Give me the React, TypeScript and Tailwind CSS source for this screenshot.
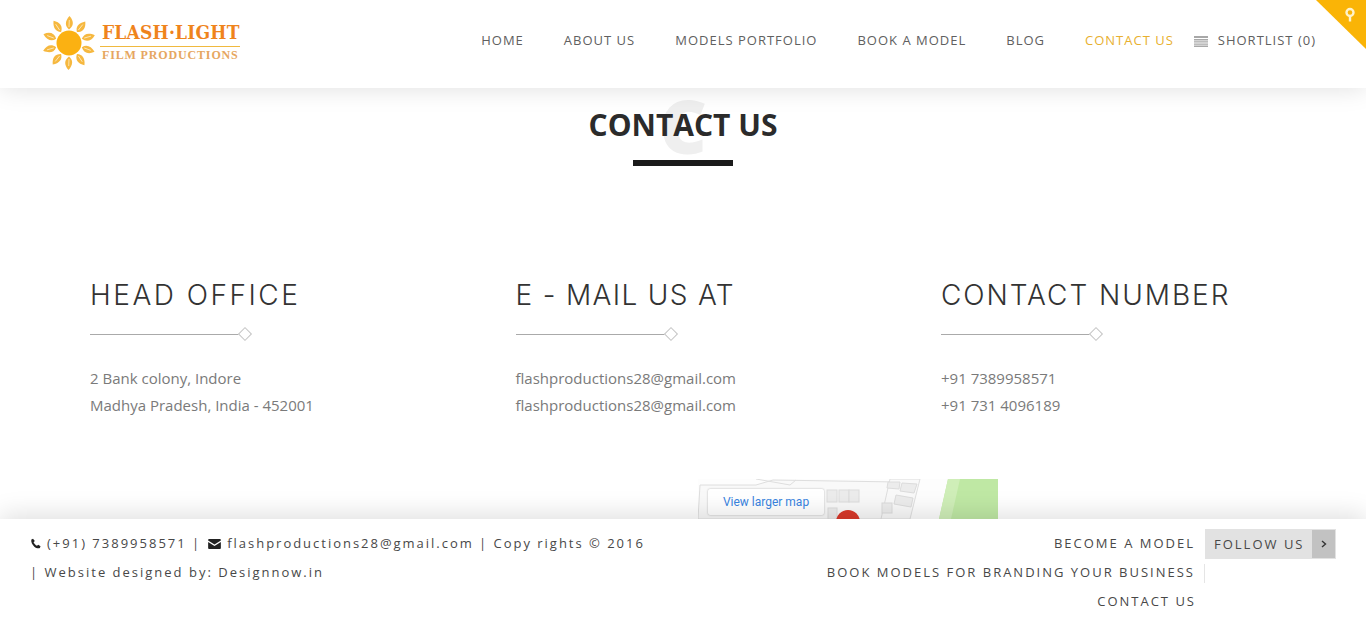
const navLinks = ['HOME', 'ABOUT US', 'MODELS PORTFOLIO', 'BOOK A MODEL', 'BLOG'];

const columns = [
  { title: 'HEAD OFFICE', tracking: 'tracking-[2.5px]', lines: ['2 Bank colony, Indore', 'Madhya Pradesh, India - 452001'] },
  { title: 'E - MAIL US AT', tracking: 'tracking-[1.35px]', lines: ['flashproductions28@gmail.com', 'flashproductions28@gmail.com'] },
  { title: 'CONTACT NUMBER', tracking: 'tracking-[1.95px]', lines: ['+91 7389958571', '+91 731 4096189'] },
];

const SunLogo = () => (
  <svg width="56" height="56" viewBox="0 0 56 56" className="shrink-0">
    {[0, 36, 72, 108, 144, 180, 216, 252, 288, 324].map((deg) => (
      <g key={deg} transform={`rotate(${deg} 28 28)`}>
        <path d="M28.500 1 C33 6 33 11 28 14.500 C23.500 11 24 6 28.500 1 Z" fill="#f6b83f" />
        <path d="M28.300 5 L28 12" stroke="#fdeec9" strokeWidth="0.800" />
      </g>
    ))}
    <circle cx="28" cy="28" r="12.500" fill="#fbb112" />
  </svg>
);

const Divider = () => (
  <div className="mt-[15px] flex h-[14px] w-[162px] items-center">
    <div className="h-px w-[151px] bg-[#aaaaaa]" />
    <div className="ml-[-1px] h-[10px] w-[10px] rotate-45 border border-[#c4c4c4] bg-white" />
  </div>
);

const MapPiece = () => (
  <svg width="300" height="40" viewBox="0 0 300 40" className="block">
    <rect width="300" height="40" fill="#fdfdfd" />
    <path d="M0 40 L2 6 L58 6 L75 1 L200 3 L190 40 Z" fill="#f9f9f9" stroke="#dedede" />
    <path d="M58 0 L92 6 L98 1" stroke="#dedede" fill="none" />
    <rect x="129" y="11" width="10" height="12" fill="#ececec" stroke="#dcdcdc" />
    <rect x="141" y="11" width="10" height="12" fill="#ececec" stroke="#dcdcdc" />
    <rect x="151" y="11" width="10" height="12" fill="#ececec" stroke="#dcdcdc" />
    <rect x="130" y="29" width="9" height="11" fill="#ececec" stroke="#dcdcdc" />
    <path d="M183 40 L192 0 L222 0 L212 40 Z" fill="#f9f9f9" stroke="#dedede" />
    <path d="M190 3 L202 3 L201 10 L189 9 Z" fill="#ececec" stroke="#dcdcdc" />
    <path d="M204 4 L219 5 L216 14 L202 12 Z" fill="#ececec" stroke="#dcdcdc" />
    <path d="M198 16 L215 19 L213 28 L196 25 Z" fill="#ececec" stroke="#dcdcdc" />
    <rect x="184" y="24" width="10" height="10" fill="#ececec" stroke="#dcdcdc" />
    <path d="M241 40 L250 0 L300 0 L300 40 Z" fill="#bfe8a4" />
    <path d="M241 40 L250 0 L262 0 L253 40 Z" fill="#cfeeb8" />
    <circle cx="150" cy="43" r="12" fill="#d9392b" />
  </svg>
);

export default function App() {
  return (
    <div className="relative h-[626px] w-full overflow-hidden bg-white font-['Open_Sans',sans-serif]">
      {/* header */}
      <header className="relative z-10 flex h-[88px] items-center justify-between bg-white pl-[41px] pr-[50px] shadow-[0_0_24px_rgba(0,0,0,0.13)]">
        <div className="mt-[-2px] flex items-center gap-[3px]">
          <SunLogo />
          <div className="mt-[-3px] w-[140px]">
            <div className="border-b border-[#f0b93f] pb-[3px] pl-[2px] font-['DejaVu_Serif',serif] text-[19px] font-bold leading-[21px] tracking-[0.2px] whitespace-nowrap text-[#ef841c] [font-stretch:condensed]">
              FLASH·LIGHT
            </div>
            <div className="mt-[1px] pl-[2px] font-['Liberation_Serif',serif] text-[12px] font-bold leading-[14px] tracking-[0.85px] whitespace-nowrap text-[#e6a660]">
              FILM PRODUCTIONS
            </div>
          </div>
        </div>
        <nav className="mt-[-6px] flex items-center text-[13px] tracking-[1px] text-[#606060]">
          {navLinks.map((link) => (
            <a key={link} className="mr-[40px] whitespace-nowrap">
              {link}
            </a>
          ))}
          <a className="mr-[20px] whitespace-nowrap text-[#e8b02f]">CONTACT US</a>
          <svg width="14" height="11" viewBox="0 0 14 11" className="mr-[10px]">
            <path d="M0 0h14v2H0zM0 3h14v1.400H0zM0 5.200h14v1.400H0zM0 7.400h14v1.400H0zM0 9.600h14V11H0z" fill="#a8a8a8" />
          </svg>
          <a className="whitespace-nowrap">SHORTLIST (0)</a>
        </nav>
      </header>

      {/* corner pin */}
      <div className="absolute right-0 top-0 z-20">
        <svg width="50" height="49" viewBox="0 0 50 49" className="block">
          <path d="M0 0 H50 V49 Z" fill="#fab406" />
          <circle cx="34" cy="12.500" r="3.500" fill="none" stroke="#fff3cc" strokeWidth="2.400" />
          <path d="M34 16 V21.500" stroke="#fff3cc" strokeWidth="2.400" />
        </svg>
      </div>

      {/* title */}
      <div className="flex flex-col items-center pt-[15px]">
        <div className="relative">
          <span className="absolute left-1/2 top-[-32px] -translate-x-1/2 text-[74px] font-extrabold leading-[110px] text-[#efefef]">
            C
          </span>
          <h1 className="relative text-[30px] font-bold leading-[44px] text-[#2b2b2b]">CONTACT US</h1>
        </div>
        <div className="mt-[13px] h-[6px] w-[100px] bg-[#1a1a1a]" />
      </div>

      {/* columns */}
      <div className="mt-[112px] grid grid-cols-[425.5px_425.5px_1fr] pl-[90px]">
        {columns.map((col) => (
          <div key={col.title}>
            <h3 className={`font-['Inter',sans-serif] text-[28px] font-light leading-[34px] whitespace-nowrap text-[#333333] ${col.tracking}`}>
              {col.title}
            </h3>
            <Divider />
            <div className="mt-[24px] text-[15px] leading-[27px] text-[#7a7a7a]">
              {col.lines.map((line, i) => (
                <p key={i}>{line}</p>
              ))}
            </div>
          </div>
        ))}
      </div>

      {/* map */}
      <div className="relative ml-[698px] mt-[60px] w-[300px]">
        <MapPiece />
        <div className="absolute left-[10px] top-[10px] flex h-[26px] w-[116px] items-center justify-center rounded-[2px] bg-white font-['Roboto',sans-serif] text-[12px] text-[#3a84df] shadow-[0_0_2px_rgba(0,0,0,0.3)]">
          View larger map
        </div>
      </div>

      {/* fixed footer */}
      <footer className="absolute bottom-0 left-0 right-0 z-10 flex h-[107px] justify-between bg-white pl-[30px] pr-[30px] pt-[10px] text-[13px] leading-[29px] tracking-[2px] text-[#484848] shadow-[0_-4px_24px_rgba(0,0,0,0.13)]">
        <div className="w-[640px]">
          <div className="flex items-center whitespace-nowrap">
            <svg width="11" height="11" viewBox="0 0 24 24" className="mr-[6px]">
              <path
                fill="#222222"
                d="M6.600 1.500 L3 3.500 C1.500 8 5 15 9.500 19 C13 22 18 23.500 21.500 22 L23 18 L18 14.500 L15.200 17 C12.500 15.800 8.800 11.800 7.800 9 L10.500 6.500 Z"
              />
            </svg>
            <span>(+91) 7389958571 |</span>
            <svg width="13" height="10" viewBox="0 0 14 11" className="ml-[7px] mr-[6px]">
              <path fill="#222222" d="M1 0h12a1 1 0 0 1 1 1v.6L7 6 0 1.600V1a1 1 0 0 1 1-1zM0 3.200 7 7.600l7-4.400V10a1 1 0 0 1-1 1H1a1 1 0 0 1-1-1z" />
            </svg>
            <span className="tracking-[1.98px]">flashproductions28@gmail.com | Copy rights © 2016</span>
          </div>
          <div className="whitespace-nowrap">| Website designed by: Designnow.in</div>
        </div>
        <div className="flex">
          <div className="text-right whitespace-nowrap">
            <div className="pr-[10px]">BECOME A MODEL</div>
            <div className="flex items-center justify-end">
              <span className="pr-[9px]">BOOK MODELS FOR BRANDING YOUR BUSINESS</span>
              <span className="mt-[2px] h-[19px] w-px bg-[#e5e5e5]" />
            </div>
            <div className="pr-[9px]">CONTACT US</div>
          </div>
          <div className="flex h-[30px] w-[131px] items-stretch bg-[#e2e2e2]">
            <span className="flex-1 pl-[9px] leading-[30px]">FOLLOW US</span>
            <span className="my-px mr-px flex w-[23px] items-center justify-center bg-[#c2c2c2]">
              <svg width="6" height="8" viewBox="0 0 6 8">
                <path d="M1 1 L4.500 4 L1 7" fill="none" stroke="#333333" strokeWidth="1.400" />
              </svg>
            </span>
          </div>
        </div>
      </footer>
    </div>
  );
}
